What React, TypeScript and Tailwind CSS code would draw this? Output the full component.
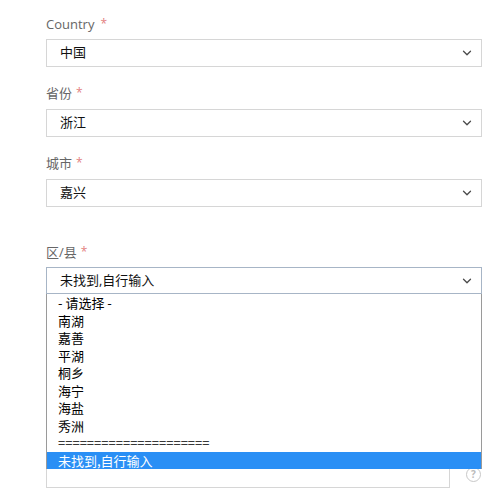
import React from "react";

const Chevron = () => (
  <svg width="10" height="6" viewBox="0 0 10 6" className="absolute right-[9px] top-1/2 -translate-y-1/2">
    <path d="M1.5 1.2l3.5 3.5 3.5-3.5" fill="none" stroke="#4a4a4a" strokeWidth="1.3" strokeLinecap="round" strokeLinejoin="round" />
  </svg>
);

const Label = ({ text, gap }: { text: string; gap: string }) => (
  <div className="h-[20px] flex items-center text-[13px] text-[#666] leading-none">
    <span>{text}</span>
    <span className={gap + " text-[#e37f7f] text-[12px]"}>*</span>
  </div>
);

const Select = ({ value }: { value: string }) => (
  <div className="relative h-[28px] flex items-center pl-[13px] text-[13px] text-[#111] bg-white border border-[#d6d6d6]">
    <span>{value}</span>
    <Chevron />
  </div>
);

export default function App() {
  const items = ["- 请选择 -", "南湖", "嘉善", "平湖", "桐乡", "海宁", "海盐", "秀洲", "====================="];
  return (
    <div className="w-[500px] h-[500px] bg-white overflow-hidden font-['Open_Sans','Noto_Sans_CJK_SC',sans-serif]">
      <div className="ml-[46px] w-[436px] pt-[14px] flex flex-col">
        <Label text="Country" gap="ml-[6px]" />
        <div className="mt-[5px]">
          <Select value="中国" />
        </div>
        <div className="mt-[16px]">
          <Label text="省份" gap="ml-[4px]" />
        </div>
        <div className="mt-[6px]">
          <Select value="浙江" />
        </div>
        <div className="mt-[16px]">
          <Label text="城市" gap="ml-[4px]" />
        </div>
        <div className="mt-[6px]">
          <Select value="嘉兴" />
        </div>
        <div className="mt-[35px]">
          <Label text="区/县" gap="ml-[4px]" />
        </div>
        <div className="mt-[5px] relative z-10">
          <div className="relative h-[27px] flex items-center pl-[13px] text-[13px] text-[#111] bg-white border border-[#a7b5c6]">
            <span>未找到,自行输入</span>
            <Chevron />
          </div>
          <div className="absolute left-0 top-full w-[436px] bg-white border-x border-[#9a9a9a] font-['Noto_Sans_CJK_SC',sans-serif] text-[13px] text-black">
            {items.map((it) => (
              <div key={it} className="h-[17.5px] leading-[17.5px] pl-[11px] whitespace-nowrap">
                {it}
              </div>
            ))}
            <div className="h-[17.5px] leading-[17.5px] pl-[11px] bg-[#2a8ff5] text-white">未找到,自行输入</div>
          </div>
        </div>
        <div className="mt-[166px] flex items-center">
          <div className="w-[404px] h-[28px] border border-[#d6d6d6] bg-white" />
          <div className="ml-[16px] w-[15px] h-[15px] rounded-full border border-[#c8c8c8] flex items-center justify-center text-[10px] text-[#bbb] font-bold leading-none">
            ?
          </div>
        </div>
      </div>
    </div>
  );
}
